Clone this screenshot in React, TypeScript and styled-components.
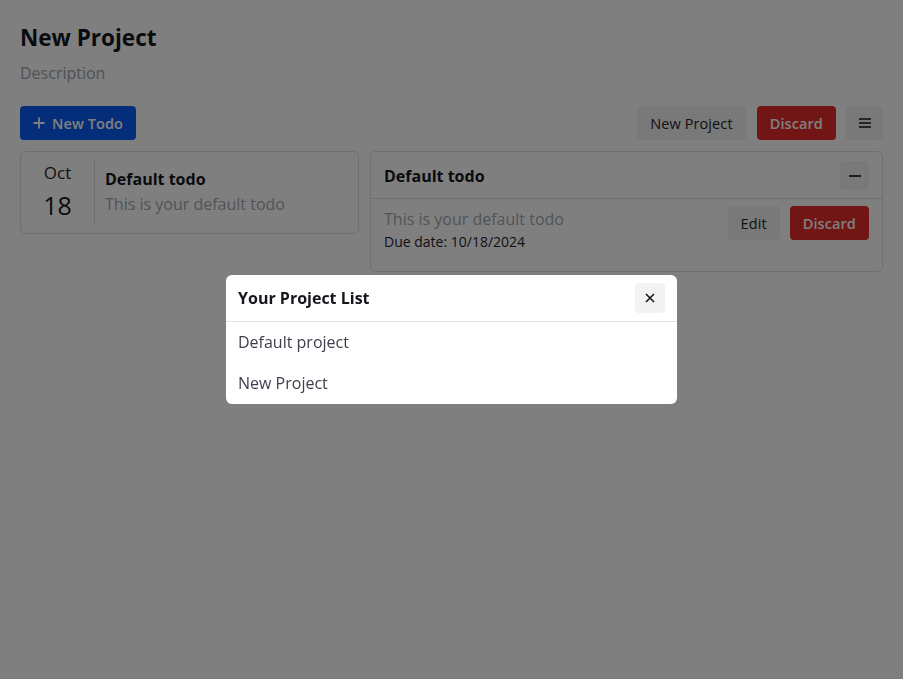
import React from 'react';
import styled, { createGlobalStyle } from 'styled-components';

const GlobalStyle = createGlobalStyle`
    * { box-sizing: border-box; }
    html, body {
        margin: 0;
        padding: 0;
        background: #ffffff;
        font-family: "Open Sans", "Noto Sans", sans-serif;
        color: #1f2229;
    }
`;

const Page = styled.div`
    padding: 20px 20px;
    min-height: 679px;
`;

const Title = styled.h1`
    margin: 4px 0 0;
    font-size: 22.5px;
    font-weight: 700;
    line-height: 28px;
    color: #14161c;
`;

const Description = styled.p`
    margin: 10px 0 0;
    font-size: 16px;
    line-height: 22px;
    color: #9ea3a9;
`;

const Toolbar = styled.div`
    display: flex;
    align-items: center;
    justify-content: space-between;
    margin-top: 22px;
`;

const Group = styled.div<{ $gap?: number }>`
    display: flex;
    align-items: center;
    gap: ${p => p.$gap ?? 10}px;
`;

const Button = styled.button<{ $variant?: 'primary' | 'danger' | 'light' }>`
    display: inline-flex;
    align-items: center;
    justify-content: center;
    gap: 7px;
    height: 34px;
    padding: 0 13px;
    border: none;
    border-radius: 4px;
    font-family: inherit;
    font-size: 14.5px;
    font-weight: ${p => (p.$variant === 'light' ? 400 : 600)};
    letter-spacing: 0.1px;
    cursor: pointer;
    background: ${p =>
        p.$variant === 'primary' ? '#0a5cf5' : p.$variant === 'danger' ? '#e32a2a' : '#f3f3f3'};
    color: ${p => (p.$variant === 'light' ? '#1f2229' : '#ffffff')};
`;

const IconButton = styled.button<{ $size?: number }>`
    display: inline-flex;
    align-items: center;
    justify-content: center;
    width: ${p => p.$size ?? 37}px;
    height: ${p => p.$size ?? 34}px;
    padding: 0;
    border: none;
    border-radius: 4px;
    background: #f3f3f3;
    color: #14161c;
    cursor: pointer;
`;

const Columns = styled.div`
    display: grid;
    grid-template-columns: 339px 1fr;
    gap: 11px;
    align-items: start;
    margin-top: 11px;
`;

const Card = styled.div`
    border: 1px solid #dfe1e4;
    border-radius: 5px;
    background: #ffffff;
`;

const TodoRow = styled.div`
    display: flex;
    align-items: center;
    padding: 8px 0 9px;
`;

const DateBox = styled.div`
    width: 74px;
    display: flex;
    flex-direction: column;
    align-items: center;
    border-right: 1px solid #dfe1e4;
    padding: 1px 0 1px;
`;

const Month = styled.span`
    font-size: 17px;
    line-height: 24px;
    color: #1f2229;
`;

const Day = styled.span`
    margin-top: 2px;
    font-size: 25px;
    line-height: 36px;
    color: #14161c;
`;

const TodoText = styled.div<{ $inset?: boolean }>`
    padding: ${p => (p.$inset ? '0 10px' : '0')};
    display: flex;
    flex-direction: column;
`;

const TodoTitle = styled.span`
    font-size: 16px;
    font-weight: 700;
    line-height: 24px;
    color: #14161c;
`;

const TodoDesc = styled.span`
    font-size: 16px;
    line-height: 26px;
    color: #a3a8ae;
`;

const CardHeader = styled.div`
    display: flex;
    align-items: center;
    justify-content: space-between;
    padding: 9px 13px 8px;
    border-bottom: 1px solid #dfe1e4;
`;

const HeaderTitle = styled.span`
    font-size: 16px;
    font-weight: 700;
    color: #14161c;
`;

const CardBody = styled.div`
    display: flex;
    justify-content: space-between;
    align-items: flex-start;
    padding: 7px 13px 19px;
`;

const Due = styled.span`
    font-size: 14px;
    line-height: 20px;
    color: #1f2229;
`;

const Backdrop = styled.div`
    position: fixed;
    inset: 0;
    background: rgba(0, 0, 0, 0.5);
    display: flex;
    justify-content: center;
    align-items: flex-start;
    padding-top: 275px;
`;

const Modal = styled.div`
    width: 451px;
    background: #ffffff;
    border-radius: 6px;
    overflow: hidden;
`;

const ModalHeader = styled.div`
    display: flex;
    align-items: center;
    justify-content: space-between;
    height: 47px;
    padding: 0 12px;
    border-bottom: 1px solid #dee0e3;
`;

const ModalTitle = styled.span`
    font-size: 16px;
    font-weight: 700;
    color: #14161c;
`;

const List = styled.ul`
    list-style: none;
    margin: 0;
    padding: 0;
`;

const ListItem = styled.li`
    height: 41px;
    display: flex;
    align-items: center;
    padding: 0 12px 2px;
    font-size: 16px;
    color: #3b3f4a;
`;

const PlusIcon = () => (
    <svg width="12" height="12" viewBox="0 0 12 12">
        <path d="M6 0.5v11M0.5 6h11" stroke="currentColor" strokeWidth="1.8" />
    </svg>
);

const MenuIcon = () => (
    <svg width="12" height="10" viewBox="0 0 12 10">
        <path d="M0 1h12M0 5h12M0 9h12" stroke="currentColor" strokeWidth="1.5" />
    </svg>
);

const MinusIcon = () => (
    <svg width="12" height="2" viewBox="0 0 12 2">
        <path d="M0 1h12" stroke="currentColor" strokeWidth="1.6" />
    </svg>
);

const CloseIcon = () => (
    <svg width="10" height="10" viewBox="0 0 10 10">
        <path d="M1 1l8 8M9 1l-8 8" stroke="currentColor" strokeWidth="1.6" />
    </svg>
);

const projects = ['Default project', 'New Project'];

const App: React.FC = () => {
    return (
        <>
            <GlobalStyle />
            <Page>
                <Title>New Project</Title>
                <Description>Description</Description>
                <Toolbar>
                    <Button $variant="primary">
                        <PlusIcon />
                        New Todo
                    </Button>
                    <Group $gap={11}>
                        <Button $variant="light">New Project</Button>
                        <Group $gap={10}>
                            <Button $variant="danger">Discard</Button>
                            <IconButton>
                                <MenuIcon />
                            </IconButton>
                        </Group>
                    </Group>
                </Toolbar>
                <Columns>
                    <Card>
                        <TodoRow>
                            <DateBox>
                                <Month>Oct</Month>
                                <Day>18</Day>
                            </DateBox>
                            <TodoText $inset>
                                <TodoTitle>Default todo</TodoTitle>
                                <TodoDesc>This is your default todo</TodoDesc>
                            </TodoText>
                        </TodoRow>
                    </Card>
                    <Card>
                        <CardHeader>
                            <HeaderTitle>Default todo</HeaderTitle>
                            <IconButton $size={29}>
                                <MinusIcon />
                            </IconButton>
                        </CardHeader>
                        <CardBody>
                            <TodoText>
                                <TodoDesc>This is your default todo</TodoDesc>
                                <Due>Due date: 10/18/2024</Due>
                            </TodoText>
                            <Group>
                                <Button $variant="light">Edit</Button>
                                <Button $variant="danger">Discard</Button>
                            </Group>
                        </CardBody>
                    </Card>
                </Columns>
            </Page>
            <Backdrop>
                <Modal>
                    <ModalHeader>
                        <ModalTitle>Your Project List</ModalTitle>
                        <IconButton $size={30}>
                            <CloseIcon />
                        </IconButton>
                    </ModalHeader>
                    <List>
                        {projects.map(p => (
                            <ListItem key={p}>{p}</ListItem>
                        ))}
                    </List>
                </Modal>
            </Backdrop>
        </>
    );
};

export default App;
